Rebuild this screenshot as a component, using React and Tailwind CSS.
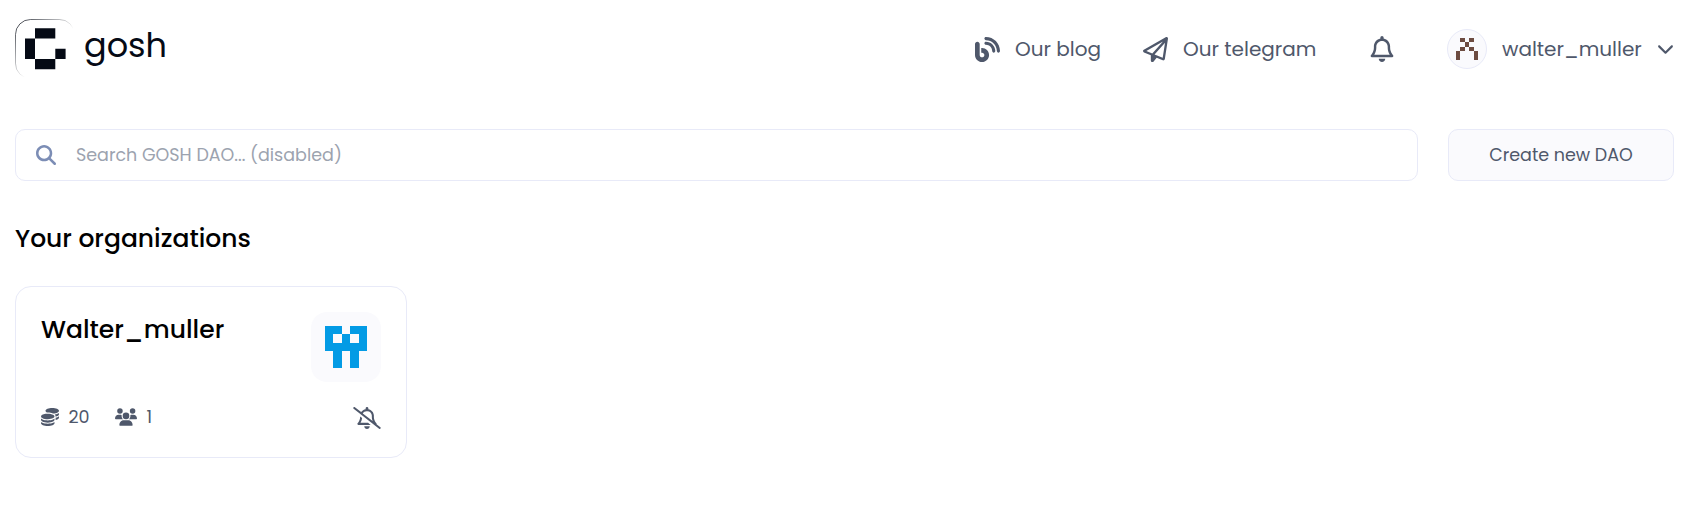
import {
  FaBlog,
  FaRegPaperPlane,
  FaRegBell,
  FaRegBellSlash,
  FaChevronDown,
  FaMagnifyingGlass,
  FaCoins,
  FaUsers,
} from 'react-icons/fa6'

function PixelArt({ rows, className }) {
  return (
    <svg viewBox={`0 0 ${rows[0].length} ${rows.length}`} className={className} fill="currentColor" shapeRendering="crispEdges">
      {rows.flatMap((row, y) =>
        [...row].map((cell, x) =>
          cell === '#' ? <rect key={`${x}-${y}`} x={x} y={y} width="1" height="1" /> : null,
        ),
      )}
    </svg>
  )
}

function Logo() {
  return (
    <a className="flex items-start text-[#050a15]">
      <svg viewBox="0 0 60 60" className="mt-1 size-[60px]" fill="none">
        <defs>
          <linearGradient id="edge" x1="4" y1="4" x2="34" y2="34" gradientUnits="userSpaceOnUse">
            <stop stopColor="#050a15" stopOpacity="0.9" />
            <stop offset="1" stopColor="#050a15" stopOpacity="0" />
          </linearGradient>
        </defs>
        <rect x="0.5" y="0.5" width="59" height="59" rx="15" stroke="url(#edge)" strokeWidth="0.8" />
        <path fill="currentColor" d="M20 9.3h20.3v10.3H20zM10 19.6h10v20.3H10zM40.3 29.8h10.3v10.1H40.3zM20 39.9h20.3v10.3H20z" />
      </svg>
      <span className="ml-[9px] mt-[7px] text-[33.5px] leading-[48px]">gosh</span>
    </a>
  )
}

function Header() {
  return (
    <header className="flex h-[98px] items-start justify-between pt-[15px]">
      <Logo />
      <nav className="flex h-[68px] items-center text-xl text-[#4f586b]">
        <a className="flex items-center">
          <FaBlog className="mr-[15px] size-[25px]" />
          <span className="w-[128px]">Our blog</span>
        </a>
        <a className="flex items-center">
          <FaRegPaperPlane className="mr-[15px] size-[25px]" />
          <span className="w-[186px]">Our telegram</span>
        </a>
        <FaRegBell className="mr-[52px] size-[26px]" />
        <div className="flex items-center">
          <div className="mr-[15px] flex size-10 items-center justify-center rounded-full border border-[#e8eaf8] bg-[#fafafd]">
            <PixelArt className="size-[22px] text-[#6d4c41]" rows={['.#.#.', '..#..', '.#.#.', '#...#', '#...#']} />
          </div>
          <span className="w-[155px]">walter_muller</span>
          <FaChevronDown className="mb-px size-[17px]" />
        </div>
      </nav>
    </header>
  )
}

function SearchRow() {
  return (
    <div className="mt-[31px] flex h-[52px] gap-[30px] text-[17.5px]">
      <div className="flex grow items-center rounded-[10px] border border-[#e8eaf8] pl-5">
        <FaMagnifyingGlass className="mr-5 size-5 text-[#7c8db5]" />
        <span className="text-[#9ca3af]">Search GOSH DAO... (disabled)</span>
      </div>
      <button className="w-[226px] rounded-[10px] border border-[#e8eaf8] bg-[#fafafd] text-[#4f586b]">
        Create new DAO
      </button>
    </div>
  )
}

function OrganizationCard() {
  return (
    <article className="mt-[29px] flex h-[172px] w-[392px] flex-col justify-between rounded-2xl border border-[#e8eaf8] px-[25px] pb-[28px] pt-[25px]">
      <div className="flex items-start justify-between">
        <h3 className="text-[25px] font-medium leading-9 text-black">Walter_muller</h3>
        <div className="flex size-[70px] items-center justify-center rounded-2xl bg-[#fafafd]">
          <PixelArt className="size-[42px] text-[#039be5]" rows={['##.##', '#.#.#', '#####', '.#.#.', '.#.#.']} />
        </div>
      </div>
      <div className="flex h-6 items-center text-[17.5px] text-[#4f586b]">
        <FaCoins className="mr-[9.5px] size-[18px]" />
        <span className="w-[46.5px]">20</span>
        <FaUsers className="mr-[9.5px] size-[22px]" />
        <span>1</span>
        <FaRegBellSlash className="ml-auto mt-[2px] h-[22px] w-[28px]" />
      </div>
    </article>
  )
}

export default function App() {
  return (
    <div className="min-h-screen bg-white pl-[15px] pr-7 font-['Poppins','Inter',sans-serif]">
      <Header />
      <SearchRow />
      <h2 className="mt-10 text-[25px] font-medium leading-9 text-black">Your organizations</h2>
      <OrganizationCard />
    </div>
  )
}
